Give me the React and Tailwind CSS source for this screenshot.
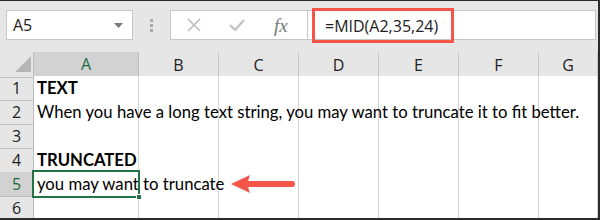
import React from "react";

const COLS = ["A", "B", "C", "D", "E", "F", "G"];
const ROWS = [
  { n: 1, text: "TEXT", bold: true },
  { n: 2, text: "When you have a long text string, you may want to truncate it to fit better." },
  { n: 3, text: "" },
  { n: 4, text: "TRUNCATED", bold: true },
  { n: 5, text: "you may want to truncate", selected: true },
  { n: 6, text: "" },
];

const cellFont = { fontFamily: "Lato, 'Open Sans', sans-serif" };
const uiFont = { fontFamily: "'Open Sans', 'Noto Sans', sans-serif" };

function Toolbar() {
  return (
    <div className="h-[51px] flex items-start pt-[9px] pl-[6px] pr-[2px]">
      {/* name box */}
      <div className="w-[127px] h-[30px] bg-white border border-[#c6c6c6] flex items-center justify-between pl-[6px] pr-[9px]">
        <span className="text-[16px] text-[#222]" style={uiFont}>A5</span>
        <svg width="9" height="5" viewBox="0 0 9 5">
          <path d="M0 0h9L4.5 5z" fill="#777" />
        </svg>
      </div>
      {/* grip dots */}
      <div className="w-[37px] h-[30px] flex flex-col items-center justify-center gap-[2px]">
        <span className="w-[3px] h-[3px] bg-[#aaa]" />
        <span className="w-[3px] h-[3px] bg-[#aaa]" />
        <span className="w-[3px] h-[3px] bg-[#aaa]" />
      </div>
      {/* cancel / enter / fx */}
      <div className="w-[138px] h-[30px] bg-white border border-[#c6c6c6] flex items-center pl-[16px]">
        <svg width="14" height="14" viewBox="0 0 14 14">
          <path d="M1 1l12 12M13 1L1 13" stroke="#bdbdbd" strokeWidth="1.6" />
        </svg>
        <svg width="16" height="12" viewBox="0 0 16 12" className="ml-[28px]">
          <path d="M1 6l5 5L15 1" stroke="#c4c4c4" strokeWidth="2.4" fill="none" />
        </svg>
        <span
          className="ml-[29px] text-[19px] italic text-[#777] leading-none"
          style={{ fontFamily: "'Liberation Serif', serif" }}
        >
          fx
        </span>
      </div>
      {/* formula input */}
      <div className="relative flex-1 h-[30px] bg-white border border-[#c6c6c6] border-l-0">
        <div className="absolute left-[4px] top-[-3px] w-[142px] h-[35px] border-[3px] border-[#f4564a]" />
        <span className="absolute left-[17px] top-[3px] text-[16px] text-[#222]" style={uiFont}>
          =MID(A2,35,24)
        </span>
      </div>
    </div>
  );
}

function ColumnHeader() {
  return (
    <div className="grid grid-cols-[34px_105px_80px_80px_80px_80px_80px_1fr] h-[24px]">
      <div className="border-r border-b border-[#bdbdbd] relative">
        <svg width="16" height="16" viewBox="0 0 16 16" className="absolute left-[15px] top-[4px]">
          <path d="M16 0V16H0z" fill="#b5b5b5" />
        </svg>
      </div>
      {COLS.map((c) => (
        <div
          key={c}
          className={
            c === "A"
              ? "bg-[#d2d2d2] border-r border-[#bdbdbd] border-b-2 border-b-[#217346] flex items-center justify-center text-[16px] text-[#1e6b3f]"
              : "border-r border-b border-[#c8c8c8] flex items-center justify-center text-[16px] text-[#222]"
          }
          style={uiFont}
        >
          {c}
        </div>
      ))}
    </div>
  );
}

function Row({ row }) {
  return (
    <div className="grid grid-cols-[34px_105px_80px_80px_80px_80px_80px_1fr] h-[24px]">
      <div
        className={
          row.selected
            ? "bg-[#d2d2d2] border-r border-b border-[#bdbdbd] flex items-center justify-center text-[16px] text-[#1e6b3f]"
            : "border-r border-b border-[#bdbdbd] flex items-center justify-center text-[16px] text-[#222]"
        }
        style={uiFont}
      >
        {row.n}
      </div>
      <div className="relative bg-white border-r border-b border-[#d4d4d4]">
        {row.text && (
          <span
            className={`absolute left-[3px] top-[0px] whitespace-nowrap text-[16.7px] text-black ${row.bold ? "font-bold" : ""}`}
            style={cellFont}
          >
            {row.text}
          </span>
        )}
      </div>
      {COLS.slice(1).map((c) => (
        <div key={c} className="bg-white border-r border-b border-[#d4d4d4]" />
      ))}
    </div>
  );
}

export default function App() {
  return (
    <div className="relative w-[600px] h-[220px] overflow-hidden bg-[#e6e6e6] border-t border-r-2 border-b-2 border-[#2b2b2b]">
      <Toolbar />
      <ColumnHeader />
      {ROWS.map((r) => (
        <Row key={r.n} row={r} />
      ))}

      {/* active cell A5 */}
      <div className="absolute left-[32px] top-[169px] w-[108px] h-[28px] border-2 border-[#217346]" />
      <div className="absolute left-[136px] top-[193px] w-[6px] h-[6px] bg-[#217346] border border-white" />

      {/* callout arrow */}
      <svg
        width="68"
        height="24"
        viewBox="0 0 68 24"
        className="absolute left-[229px] top-[171px]"
      >
        <path d="M2 12 L21 3 Q17 12 21 21 Z" fill="#f4564a" />
        <path d="M17 12 H63" stroke="#f4564a" strokeWidth="6" strokeLinecap="round" />
      </svg>
    </div>
  );
}
